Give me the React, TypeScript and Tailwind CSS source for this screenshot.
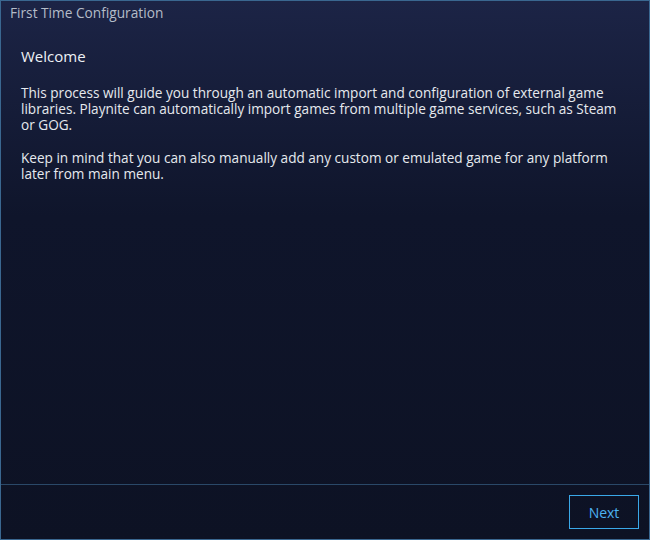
import React from 'react';

const App: React.FC = () => {
  return (
    <div
      className="w-[650px] h-[540px] flex flex-col border border-[#3a6790] bg-gradient-to-b from-[#1c2446] via-[#0f152b] via-40% to-[#0d1224] text-[13.6px] overflow-hidden"
      style={{ fontFamily: '"Open Sans", "DejaVu Sans", sans-serif' }}
    >
      {/* Title bar */}
      <div className="h-[24px] flex items-center px-[9px] text-[13.7px] text-[#b4bcc8]">
        First Time Configuration
      </div>

      {/* Content */}
      <div className="flex-1 px-[20px] pt-[19px]">
        <h1 className="text-[15px] leading-[24px] text-[#eef1f5] mb-[17px]">
          Welcome
        </h1>
        <p className="w-[610px] leading-[16px] text-[#e6e9ee] mb-[17px]">
          This process will guide you through an automatic import and
          configuration of external game libraries. Playnite can automatically
          import games from multiple game services, such as Steam or GOG.
        </p>
        <p className="w-[610px] leading-[16px] text-[#e6e9ee]">
          Keep in mind that you can also manually add any custom or emulated
          game for any platform later from main menu.
        </p>
      </div>

      {/* Footer */}
      <div className="h-[55px] border-t border-[#2a4868] flex items-center justify-end pr-[10px]">
        <button className="w-[70px] h-[34px] border border-[#3aa8e8] text-[#4cb2f2] text-[14px]">
          Next
        </button>
      </div>
    </div>
  );
};

export default App;
